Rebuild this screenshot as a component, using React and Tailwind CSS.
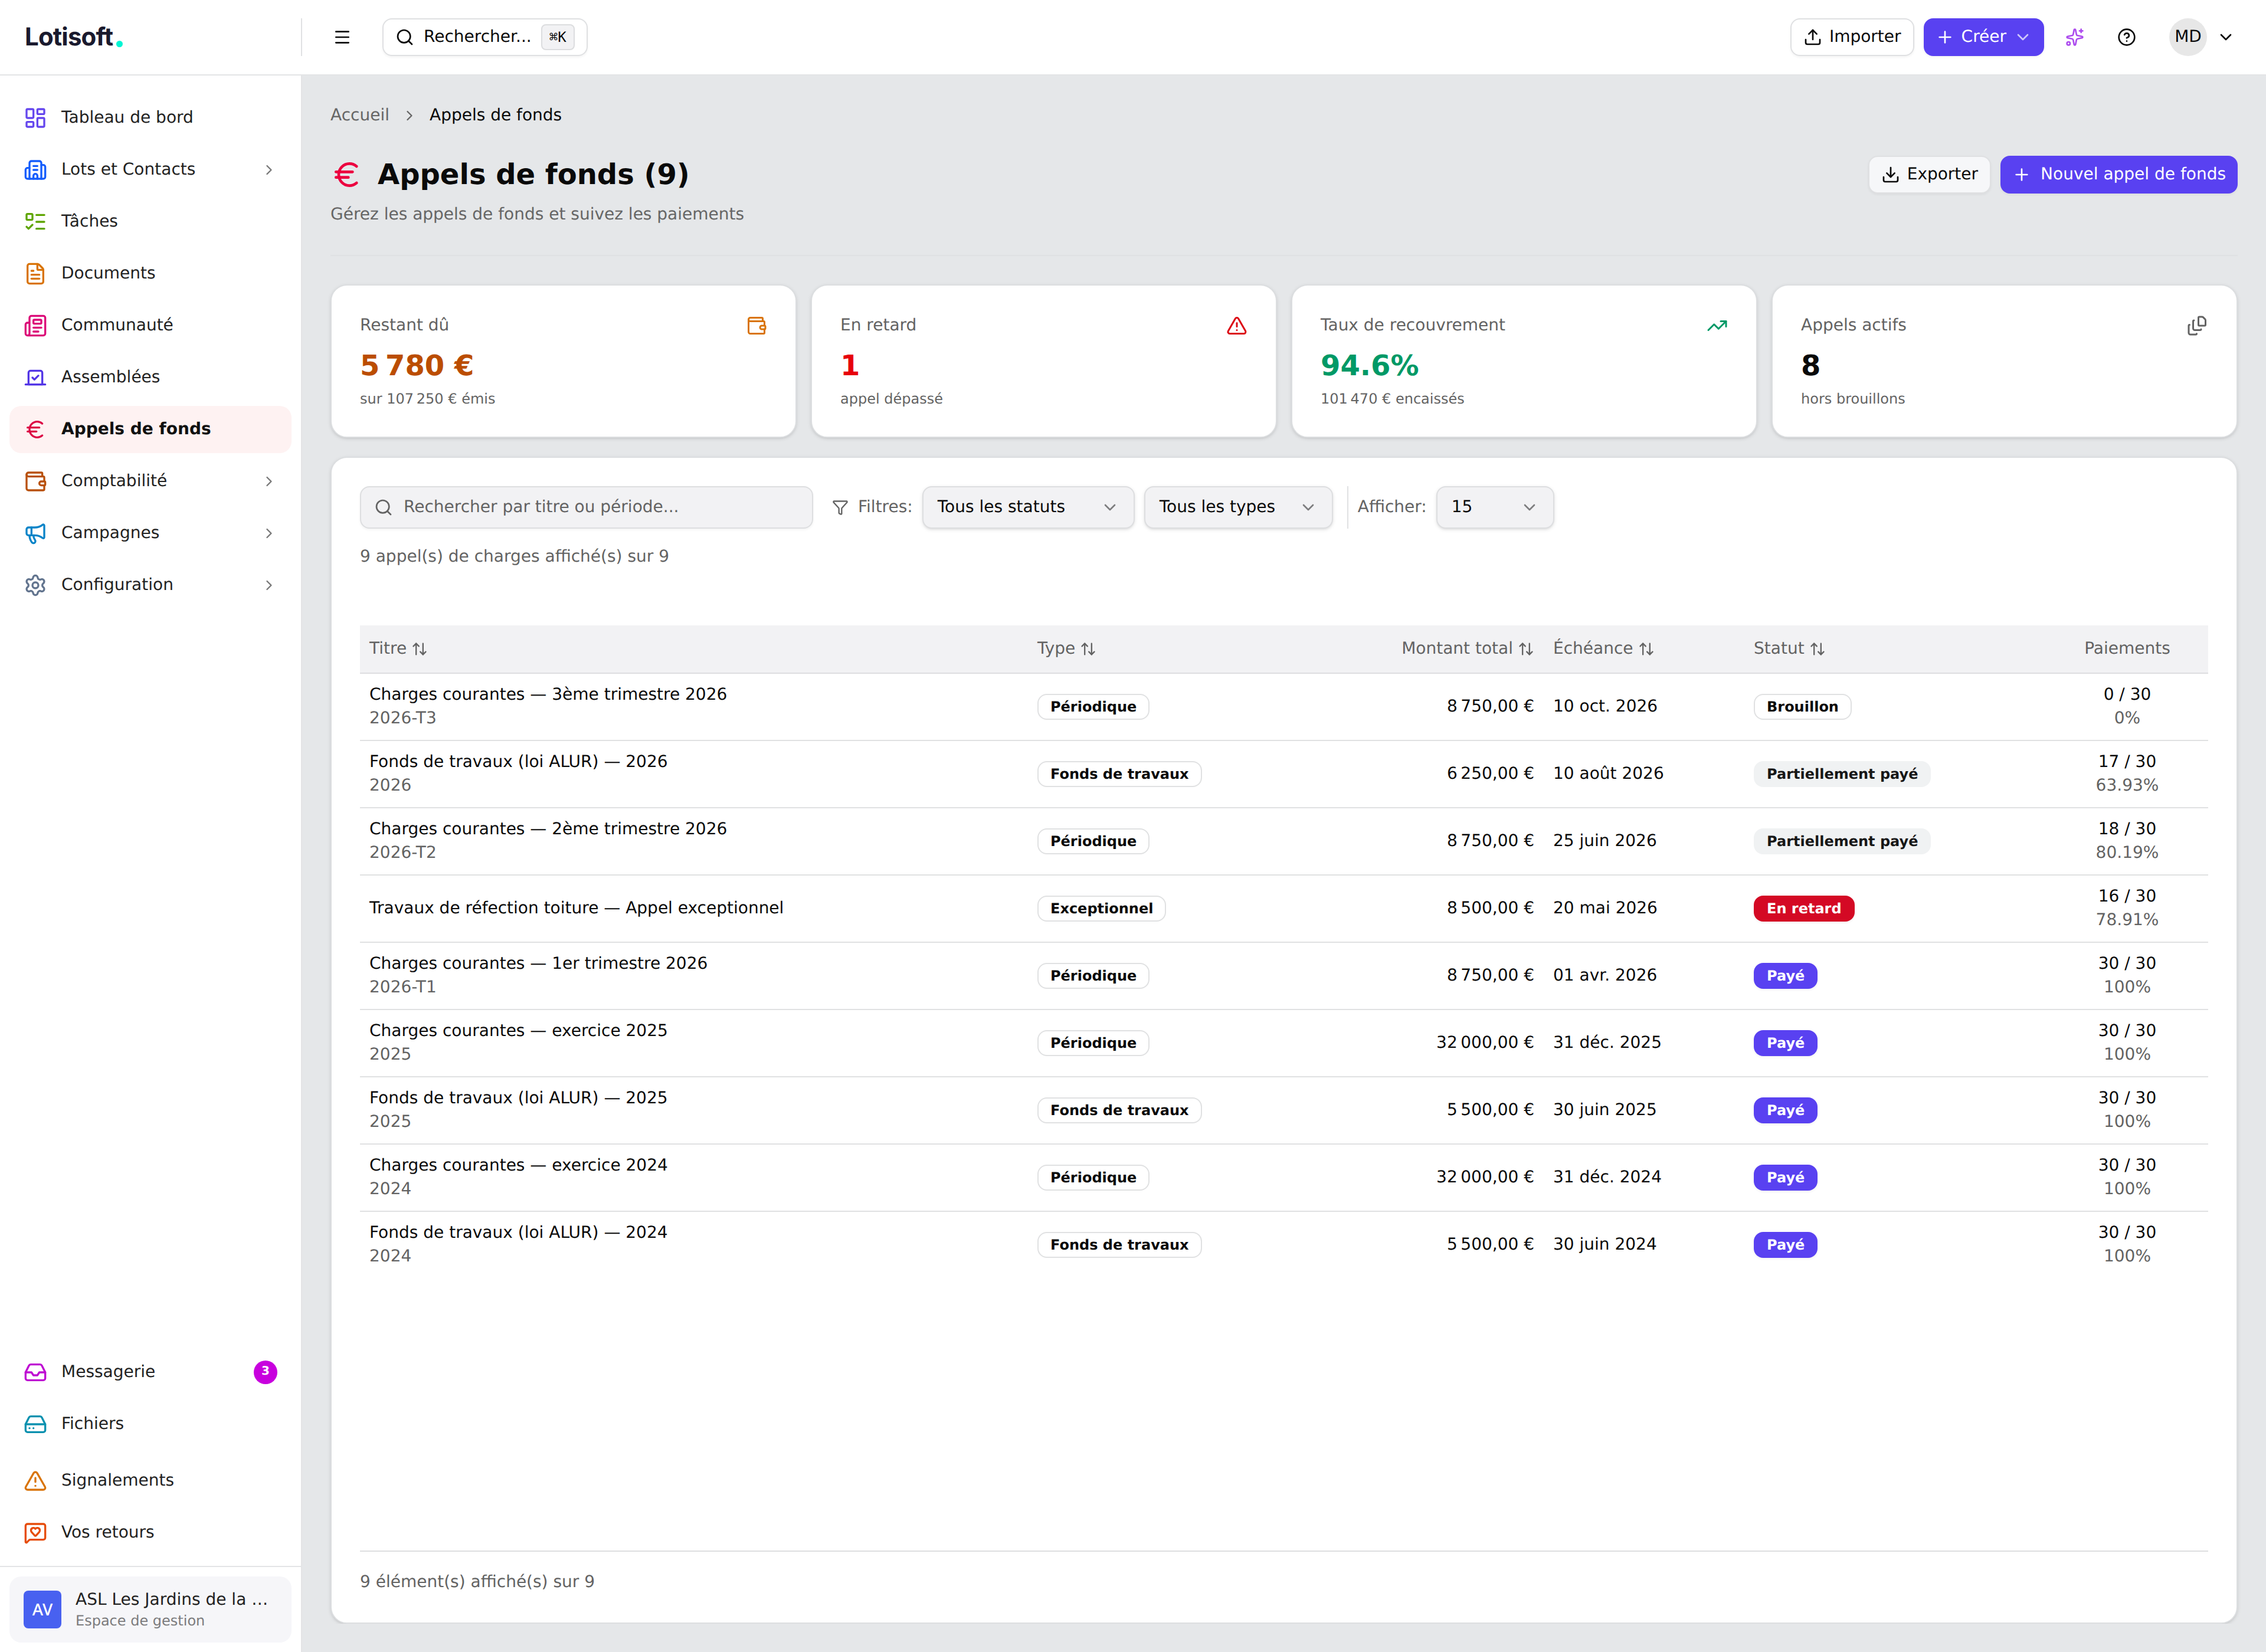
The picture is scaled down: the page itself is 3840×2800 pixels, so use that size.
import React from "react";
import {
  LayoutDashboard, FileText, Newspaper, Euro, Megaphone, Settings,
  Inbox, HardDrive, TriangleAlert, MessageSquareHeart, ChevronRight, ChevronDown, Menu, Search, Upload,
  Download, Plus, Sparkles, CircleQuestionMark, TrendingUp, Funnel, ArrowUpDown,
} from "lucide-react";

const iconProps = {
  width: 24, height: 24, viewBox: "0 0 24 24", fill: "none", stroke: "currentColor",
  strokeWidth: 2, strokeLinecap: "round", strokeLinejoin: "round",
};

function Building({ className }) {
  return (
    <svg {...iconProps} className={className}>
      <path d="M10 12h4" />
      <path d="M10 8h4" />
      <path d="M14 21v-3a2 2 0 0 0-4 0v3" />
      <path d="M6 10H4a2 2 0 0 0-2 2v7a2 2 0 0 0 2 2h16a2 2 0 0 0 2-2V9a2 2 0 0 0-2-2h-2" />
      <path d="M6 21V5a2 2 0 0 1 2-2h8a2 2 0 0 1 2 2v16" />
    </svg>
  );
}

function TaskList({ className }) {
  return (
    <svg {...iconProps} className={className}>
      <path d="M13 5h8" />
      <path d="M13 12h8" />
      <path d="M13 19h8" />
      <path d="m3 17 2 2 4-4" />
      <rect x="3" y="4" width="6" height="6" rx="1" />
    </svg>
  );
}

function Assembly({ className }) {
  return (
    <svg {...iconProps} className={className}>
      <path d="m9 12 2 2 4-4" />
      <path d="M5 7c0-1.1.9-2 2-2h10a2 2 0 0 1 2 2v12H5V7Z" />
      <path d="M22 19H2" />
    </svg>
  );
}

function WalletIcon({ className }) {
  return (
    <svg {...iconProps} className={className}>
      <path d="M19 7V4a1 1 0 0 0-1-1H5a2 2 0 0 0 0 4h15a1 1 0 0 1 1 1v4h-3a2 2 0 0 0 0 4h3a1 1 0 0 0 1-1v-2a1 1 0 0 0-1-1" />
      <path d="M3 5v14a2 2 0 0 0 2 2h15a1 1 0 0 0 1-1v-4" />
    </svg>
  );
}

function FileStack({ className }) {
  return (
    <svg {...iconProps} className={className}>
      <path d="M11 21a1 1 0 0 1-1 1H4a2 2 0 0 1-2-2v-8a1 1 0 0 1 1-1" />
      <path d="M16 16a1 1 0 0 1-1 1H9a2 2 0 0 1-2-2V7a1 1 0 0 1 1-1" />
      <path d="M21 6a2 2 0 0 0-.586-1.414l-2-2A2 2 0 0 0 17 2h-3a1 1 0 0 0-1 1v8a1 1 0 0 0 1 1h6a1 1 0 0 0 1-1z" />
    </svg>
  );
}

const topNav = [
  { label: "Tableau de bord", icon: LayoutDashboard, color: "text-[#6547ee]" },
  { label: "Lots et Contacts", icon: Building, color: "text-blue-600", sub: true },
  { label: "Tâches", icon: TaskList, color: "text-lime-600" },
  { label: "Documents", icon: FileText, color: "text-[#d97408]" },
  { label: "Communauté", icon: Newspaper, color: "text-[#dc0a78]" },
  { label: "Assemblées", icon: Assembly, color: "text-[#5235e6]" },
  { label: "Appels de fonds", icon: Euro, color: "text-[#dc0a46]", active: true },
  { label: "Comptabilité", icon: WalletIcon, color: "text-[#b8500a]", sub: true },
  { label: "Campagnes", icon: Megaphone, color: "text-[#0a84c8]", sub: true },
  { label: "Configuration", icon: Settings, color: "text-slate-500", sub: true },
];

const bottomNav = [
  [
    { label: "Messagerie", icon: Inbox, color: "text-[#be0ad2]", count: 3 },
    { label: "Fichiers", icon: HardDrive, color: "text-[#0a91af]" },
  ],
  [
    { label: "Signalements", icon: TriangleAlert, color: "text-[#d97408]" },
    { label: "Vos retours", icon: MessageSquareHeart, color: "text-[#e64c0a]" },
  ],
];

function NavItem({ item }) {
  const Icon = item.icon;
  return (
    <div className={`flex h-10 items-center gap-3 rounded-[10px] px-3 ${item.active ? "bg-[#fef2f2]" : ""}`}>
      <Icon className={`size-5 shrink-0 ${item.color}`} />
      <span className={`flex-1 pb-px ${item.active ? "font-bold text-[#111]" : "text-[#222]"}`}>{item.label}</span>
      {item.sub && <ChevronRight className="size-3.5 text-[#777]" />}
      {item.count && (
        <span className="flex size-5 items-center justify-center rounded-full bg-fuchsia-600 pb-[3px] text-[10px] leading-none font-bold text-white">
          {item.count}
        </span>
      )}
    </div>
  );
}

const stats = [
  { label: "Restant dû", value: "5\u202f780\u00a0€", sub: "sur 107\u202f250\u00a0€ émis", icon: WalletIcon, iconColor: "text-[#d97408]", color: "text-amber-700" },
  { label: "En retard", value: "1", sub: "appel dépassé", icon: TriangleAlert, iconColor: "text-[#dc0a14]", color: "text-[#e7000b]" },
  { label: "Taux de recouvrement", value: "94.6%", sub: "101\u202f470\u00a0€ encaissés", icon: TrendingUp, iconColor: "text-emerald-600", color: "text-emerald-600" },
  { label: "Appels actifs", value: "8", sub: "hors brouillons", icon: FileStack, iconColor: "text-[#636363]", color: "text-[#0a0a0a]" },
];

const rows = [
  ["Charges courantes — 3ème trimestre 2026", "2026-T3", "Périodique", "8\u202f750,00\u00a0€", "10 oct. 2026", "Brouillon", "0 / 30", "0%"],
  ["Fonds de travaux (loi ALUR) — 2026", "2026", "Fonds de travaux", "6\u202f250,00\u00a0€", "10 août 2026", "Partiellement payé", "17 / 30", "63.93%"],
  ["Charges courantes — 2ème trimestre 2026", "2026-T2", "Périodique", "8\u202f750,00\u00a0€", "25 juin 2026", "Partiellement payé", "18 / 30", "80.19%"],
  ["Travaux de réfection toiture — Appel exceptionnel", "", "Exceptionnel", "8\u202f500,00\u00a0€", "20 mai 2026", "En retard", "16 / 30", "78.91%"],
  ["Charges courantes — 1er trimestre 2026", "2026-T1", "Périodique", "8\u202f750,00\u00a0€", "01 avr. 2026", "Payé", "30 / 30", "100%"],
  ["Charges courantes — exercice 2025", "2025", "Périodique", "32\u202f000,00\u00a0€", "31 déc. 2025", "Payé", "30 / 30", "100%"],
  ["Fonds de travaux (loi ALUR) — 2025", "2025", "Fonds de travaux", "5\u202f500,00\u00a0€", "30 juin 2025", "Payé", "30 / 30", "100%"],
  ["Charges courantes — exercice 2024", "2024", "Périodique", "32\u202f000,00\u00a0€", "31 déc. 2024", "Payé", "30 / 30", "100%"],
  ["Fonds de travaux (loi ALUR) — 2024", "2024", "Fonds de travaux", "5\u202f500,00\u00a0€", "30 juin 2024", "Payé", "30 / 30", "100%"],
];

const badgeStyles = {
  Brouillon: "border-[#e0e1e2] text-[#0a0a0a]",
  "Partiellement payé": "border-transparent bg-[#f0f2f3] text-[#171717]",
  "En retard": "border-transparent bg-[#d40924] text-white shadow-xs",
  Payé: "border-transparent bg-[#5941f1] text-white shadow-xs",
};

function Badge({ className, children }) {
  return (
    <span className={`inline-flex items-center rounded-lg border px-2.5 py-0.5 text-xs font-bold whitespace-nowrap ${className}`}>
      {children}
    </span>
  );
}

const cols = "grid grid-cols-[566px_190px_247px_170px_256px_137px] items-center";

function SortHead({ children, right }) {
  return (
    <div className={`flex items-center gap-1 px-2 ${right ? "justify-end" : ""}`}>
      <span className="pb-px">{children}</span>
      <ArrowUpDown className="size-3.5" />
    </div>
  );
}

function Select({ width, children }) {
  return (
    <div className={`flex h-9 items-center justify-between rounded-lg border border-[#dddee0] bg-[#f2f2f4] px-3 text-[#0a0a0a] shadow-sm ${width}`}>
      <span className="pb-px">{children}</span>
      <ChevronDown className="size-4 opacity-50" />
    </div>
  );
}

export default function App() {
  return (
    <div className="flex h-[1400px] w-[1920px] flex-col overflow-hidden bg-[#e5e7e9] font-['DejaVu_Sans',sans-serif] text-sm text-[#0a0a0a] [text-rendering:geometricPrecision] [zoom:2]">
      <header className="flex h-16 shrink-0 items-center border-b border-[#e3e4e6] bg-white">
        <div className="flex h-8 w-64 items-center border-r border-[#e0e1e3] pl-[21px]">
          <span className="font-['Inter',sans-serif] text-[21px] leading-8 font-bold tracking-[-0.02em] text-[#1a1a2e]">Lotisoft</span>
          <span className="mt-[11px] ml-[3px] size-[5.5px] rounded-full bg-[#00f5d4]" />
        </div>
        <div className="ml-[18px] flex size-8 items-center justify-center">
          <Menu className="size-4" />
        </div>
        <div className="ml-[18px] flex h-8 items-center gap-2 rounded-lg border border-[#dfe0e2] px-2.5 shadow-xs">
          <Search className="size-4" />
          <span className="pb-px">Rechercher...</span>
          <span className="rounded border border-[#dcdddf] bg-[#f2f2f4] px-1.5 py-0.5 font-['DejaVu_Sans_Mono',monospace] text-xs">⌘K</span>
        </div>
        <div className="ml-auto flex items-center gap-2 pr-[26px]">
          <div className="flex h-8 items-center gap-1.5 rounded-lg border border-[#dfe0e2] px-2.5 shadow-xs">
            <Upload className="size-4" />
            <span className="pb-px">Importer</span>
          </div>
          <div className="flex h-8 items-center gap-1.5 rounded-lg bg-[#5941f1] px-2.5 text-white shadow-xs">
            <Plus className="size-4" />
            <span className="pb-px">Créer</span>
            <ChevronDown className="size-4 opacity-70" />
          </div>
          <div className="flex size-9 items-center justify-center text-[#ac4bee]">
            <Sparkles className="size-4" />
          </div>
          <div className="flex size-9 items-center justify-center">
            <CircleQuestionMark className="size-4" />
          </div>
          <div className="ml-2.5 flex items-center gap-2">
            <div className="flex size-8 items-center justify-center rounded-full bg-[#e7e7e7] pb-px">MD</div>
            <ChevronDown className="size-4" />
          </div>
        </div>
      </header>

      <div className="flex min-h-0 flex-1">
        <aside className="flex w-64 shrink-0 flex-col border-r border-[#e3e4e6] bg-white">
          <nav className="flex flex-1 flex-col gap-1 px-2 pt-4">
            {topNav.map((item) => <NavItem key={item.label} item={item} />)}
          </nav>
          <div className="flex flex-col gap-2 px-2 pb-2">
            {bottomNav.map((group, i) => (
              <div key={i} className="flex flex-col gap-1">
                {group.map((item) => <NavItem key={item.label} item={item} />)}
              </div>
            ))}
          </div>
          <div className="border-t border-[#e3e4e6] p-2">
            <div className="flex h-14 items-center gap-3 rounded-[10px] bg-[#f6f6f9] px-3">
              <div className="flex size-8 items-center justify-center rounded bg-[#4861f0] font-['Noto_Sans',sans-serif] font-medium text-white">AV</div>
              <div className="flex-1">
                <div className="leading-[19px] whitespace-nowrap text-[#222]">ASL Les Jardins de la …</div>
                <div className="text-xs leading-[17px] text-[#7b7b7d]">Espace de gestion</div>
              </div>
            </div>
          </div>
        </aside>

        <main className="mb-6 flex flex-1 flex-col overflow-hidden px-6 pt-6">
          <div className="flex h-5 items-center gap-2.5">
            <span className="pb-px text-[#666]">Accueil</span>
            <ChevronRight className="size-3.5 text-[#666]" />
            <span className="pb-px">Appels de fonds</span>
          </div>

          <div className="mt-6 flex items-center justify-between">
            <div className="flex items-center gap-3">
              <Euro className="size-7 text-[#ec003f]" />
              <h1 className="text-2xl font-bold">Appels de fonds (9)</h1>
            </div>
            <div className="flex gap-2">
              <div className="flex h-8 items-center gap-1.5 rounded-lg border border-[#dfe0e2] bg-[#f6f7f9] px-2.5 shadow-xs">
                <Download className="size-4" />
                <span className="pb-px">Exporter</span>
              </div>
              <div className="flex h-8 items-center gap-2 rounded-lg bg-[#5941f1] px-2.5 text-white shadow-xs">
                <Plus className="size-4" />
                <span className="pb-px">Nouvel appel de fonds</span>
              </div>
            </div>
          </div>
          <p className="mt-[7.5px] border-b border-[#dfe1e3] pb-[24.5px] text-[#666]">Gérez les appels de fonds et suivez les paiements</p>

          <div className="mt-6 grid grid-cols-4 gap-3">
            {stats.map(({ label, value, sub, icon: Icon, iconColor, color }) => (
              <div key={label} className="rounded-[14px] border border-[#dcdee0] bg-white p-6 shadow-sm">
                <div className="flex h-5 items-center justify-between text-[#636363]">
                  <span className="pb-px">{label}</span>
                  <Icon className={`size-4.5 ${iconColor}`} />
                </div>
                <div className={`mt-2 text-2xl font-bold ${color}`}>{value}</div>
                <div className="mt-1 text-xs text-[#636363]">{sub}</div>
              </div>
            ))}
          </div>

          <section className="mt-4 flex flex-1 flex-col rounded-[14px] border border-[#dcdee0] bg-white p-6 shadow-sm">
            <div className="flex items-center gap-2 text-[#636363]">
              <div className="mr-2 flex h-9 w-96 items-center gap-[9px] rounded-lg border border-[#dddee0] bg-[#f2f2f4] px-[11px] shadow-xs">
                <Search className="size-4" />
                <span className="pb-px">Rechercher par titre ou période...</span>
              </div>
              <Funnel className="size-3.5" />
              <span className="pb-px">Filtres:</span>
              <Select width="w-[180px]">Tous les statuts</Select>
              <Select width="w-[160px]">Tous les types</Select>
              <div className="ml-1 h-9 w-px bg-[#e0e1e3]" />
              <span className="pb-px">Afficher:</span>
              <Select width="w-[100px]">15</Select>
            </div>
            <div className="mt-[13.5px] text-[#636363]">9 appel(s) de charges affiché(s) sur 9</div>

            <div className="mt-[48.5px]">
              <div className={`${cols} h-[41px] border-b border-[#dddee0] bg-[#f2f2f4] text-[#636363]`}>
                <SortHead>Titre</SortHead>
                <SortHead>Type</SortHead>
                <SortHead right>Montant total</SortHead>
                <SortHead>Échéance</SortHead>
                <SortHead>Statut</SortHead>
                <div className="pb-px text-center">Paiements</div>
              </div>
              {rows.map(([title, period, type, amount, due, status, paid, pct]) => (
                <div key={title} className={`${cols} h-[57px] border-b border-[#e0e1e2] last:border-transparent`}>
                  <div className="px-2 pb-px">
                    <div>{title}</div>
                    {period && <div className="text-[#636363]">{period}</div>}
                  </div>
                  <div className="flex px-2"><Badge className="border-[#e0e1e2]">{type}</Badge></div>
                  <div className="px-2 pb-px text-right">{amount}</div>
                  <div className="px-2 pb-px">{due}</div>
                  <div className="flex px-2"><Badge className={badgeStyles[status]}>{status}</Badge></div>
                  <div className="px-2 pb-px text-center">
                    <div>{paid}</div>
                    <div className="text-[#636363]">{pct}</div>
                  </div>
                </div>
              ))}
            </div>

            <div className="mt-auto -mb-px border-t border-[#dddee0] pt-[15.5px] pb-[1.5px] text-[#636363]">9 élément(s) affiché(s) sur 9</div>
          </section>
        </main>
      </div>
    </div>
  );
}
